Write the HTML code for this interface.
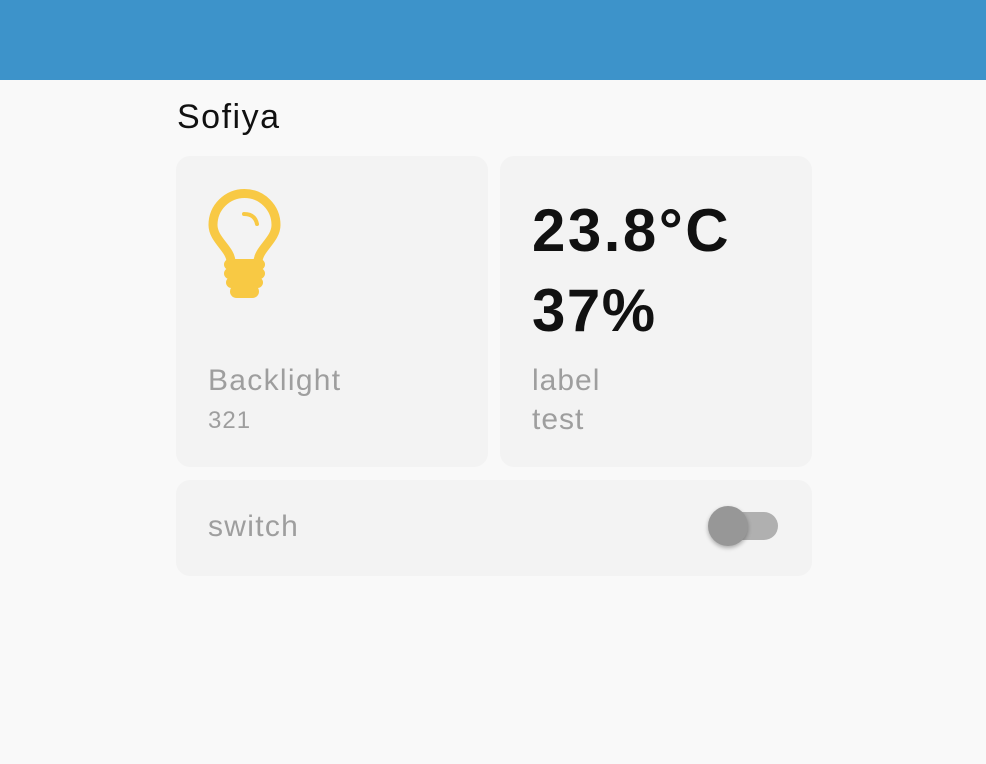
<!DOCTYPE html>
<html><head><style>
body{margin:0;width:986px;height:764px;background:#f9f9f9;font-family:"Liberation Sans",sans-serif;position:relative;overflow:hidden}
.top{position:absolute;left:0;top:0;width:986px;height:80px;background:#3d93ca}
.t{position:absolute;white-space:nowrap}
.card{position:absolute;background:#f3f3f3;border-radius:14px}
.g{color:#9e9e9e}
</style></head><body>
<div class="top"></div>
<div class="t" style="left:177px;top:98px;font-size:34px;color:#111;letter-spacing:1.5px">Sofiya</div>
<div class="card" style="left:176px;top:156px;width:312px;height:311px"></div>
<div class="card" style="left:500px;top:156px;width:312px;height:311px"></div>
<div class="card" style="left:176px;top:480px;width:636px;height:96px"></div>
<svg style="position:absolute;left:200px;top:183px" width="90" height="120" viewBox="200 183 90 120">
<path d="M231 262 C231 249 213 240 213 225 A31 31 0 0 1 276 225 C276 240 258 249 258 262" fill="none" stroke="#f8c944" stroke-width="9" stroke-linejoin="round"/>
<path d="M244 214 Q255 214 257 224" fill="none" stroke="#f8c944" stroke-width="4" stroke-linecap="round"/>
<rect x="224" y="259" width="41" height="11" rx="5.5" fill="#f8c944"/>
<rect x="224" y="268" width="41" height="11" rx="5.5" fill="#f8c944"/>
<rect x="226" y="277" width="37" height="11" rx="5.5" fill="#f8c944"/>
<rect x="230" y="285" width="29" height="13" rx="6.5" fill="#f8c944"/>
</svg>
<div class="t g" style="left:208px;top:364px;font-size:30px;letter-spacing:1.3px">Backlight</div>
<div class="t g" style="left:208px;top:407px;font-size:24px;letter-spacing:1px">321</div>
<div class="t" style="left:532px;top:196px;font-size:60px;font-weight:bold;color:#111;letter-spacing:2.5px">23.8°C</div>
<div class="t" style="left:532px;top:276px;font-size:60px;font-weight:bold;color:#111;letter-spacing:1.5px">37%</div>
<div class="t g" style="left:532px;top:364px;font-size:30px;letter-spacing:1px">label</div>
<div class="t g" style="left:532px;top:403px;font-size:30px;letter-spacing:1px">test</div>
<div class="t g" style="left:208px;top:510px;font-size:30px;letter-spacing:1.3px">switch</div>
<div style="position:absolute;left:725px;top:512px;width:53px;height:28px;border-radius:14px;background:#b0b0b0"></div>
<div style="position:absolute;left:708px;top:506px;width:40px;height:40px;border-radius:50%;background:#979797;box-shadow:0 2px 4px rgba(0,0,0,.3)"></div>
</body></html>
